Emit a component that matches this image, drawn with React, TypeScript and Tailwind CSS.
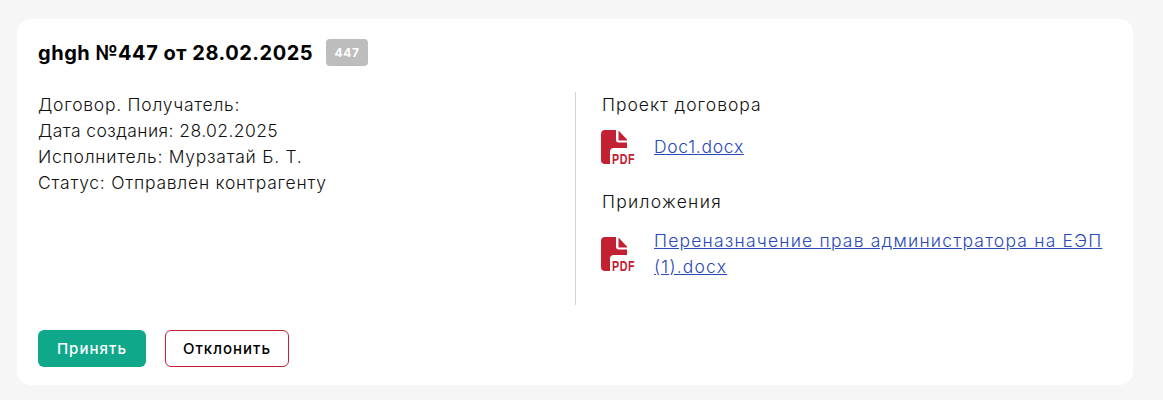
function PdfIcon() {
  return (
    <svg width="36" height="34" viewBox="0 0 36 34" className="ml-[-1px] shrink-0 overflow-visible">
      <path
        d="M4 0H15V10C15 11.500 16 12.500 17.500 12.500H26V18H12.500C10.500 18 9 19.500 9 21.500V34H4C1.500 34 0 32.500 0 30V4C0 1.500 1.500 0 4 0Z"
        fill="#c32033"
      />
      <path d="M17.500 0.500L26 9.500V10.500H17.500Z" fill="#c32033" />
      <text
        x="11"
        y="34"
        fill="#c32033"
        fontFamily="'Liberation Sans', sans-serif"
        fontWeight="700"
        fontSize="15"
        textLength="23"
        lengthAdjust="spacingAndGlyphs"
      >
        PDF
      </text>
    </svg>
  )
}

function FileRow({ name, className }: { name: string; className: string }) {
  return (
    <div className="flex items-center gap-[17px]">
      <PdfIcon />
      <a href="#" className={`w-[470px] text-[#2a48b8] underline ${className}`}>
        {name}
      </a>
    </div>
  )
}

export default function App() {
  return (
    <div className="h-[400px] bg-[#f6f6f6] pl-[17px] pr-[30px] pt-[19px] font-['Inter','Noto_Sans',sans-serif] text-[17.5px] font-light leading-[26px] tracking-[0.75px] text-[#111]">
      <div className="flex h-[366px] flex-col rounded-[14px] bg-white pl-[21px] pr-[10px] pt-[20px]">
        {/* Header */}
        <div className="flex h-[27px] items-center gap-[13px]">
          <h2 className="text-[20px] font-bold tracking-[0.52px] text-black">ghgh №447 от 28.02.2025</h2>
          <span className="flex h-[27px] w-[42px] items-center justify-center rounded-[4px] bg-[#bdbdbd] text-[12px] font-bold tracking-[0.6px] text-white">
            447
          </span>
        </div>

        {/* Body */}
        <div className="mt-[26px] flex h-[213px]">
          <div className="w-[538px] shrink-0 border-r border-[#d4d4d4]">
            <p>Договор. Получатель:</p>
            <p className="tracking-[0.42px]">Дата создания: 28.02.2025</p>
            <p>Исполнитель: Мурзатай Б. Т.</p>
            <p>Статус: Отправлен контрагенту</p>
          </div>
          <div className="min-w-0 flex-1 pl-[26px]">
            <p className="tracking-[0.97px]">Проект договора</p>
            <div className="mt-[12px]">
              <FileRow name="Doc1.docx" className="tracking-[0.7px]" />
            </div>
            <p className="mt-[25px] tracking-[1.3px]">Приложения</p>
            <div className="mt-[13px]">
              <FileRow name="Переназначение прав администратора на ЕЭП (1).docx" className="tracking-[1.2px]" />
            </div>
          </div>
        </div>

        {/* Actions */}
        <div className="mt-[25px] flex gap-[19px]">
          <button className="h-[37px] w-[108px] rounded-[6px] bg-[#0fa88b] text-[15px] font-medium tracking-[1.05px] text-white">
            Принять
          </button>
          <button className="h-[37px] w-[124px] rounded-[6px] border border-[#c32033] bg-white text-[15px] font-medium tracking-[1px] text-black">
            Отклонить
          </button>
        </div>
      </div>
    </div>
  )
}
